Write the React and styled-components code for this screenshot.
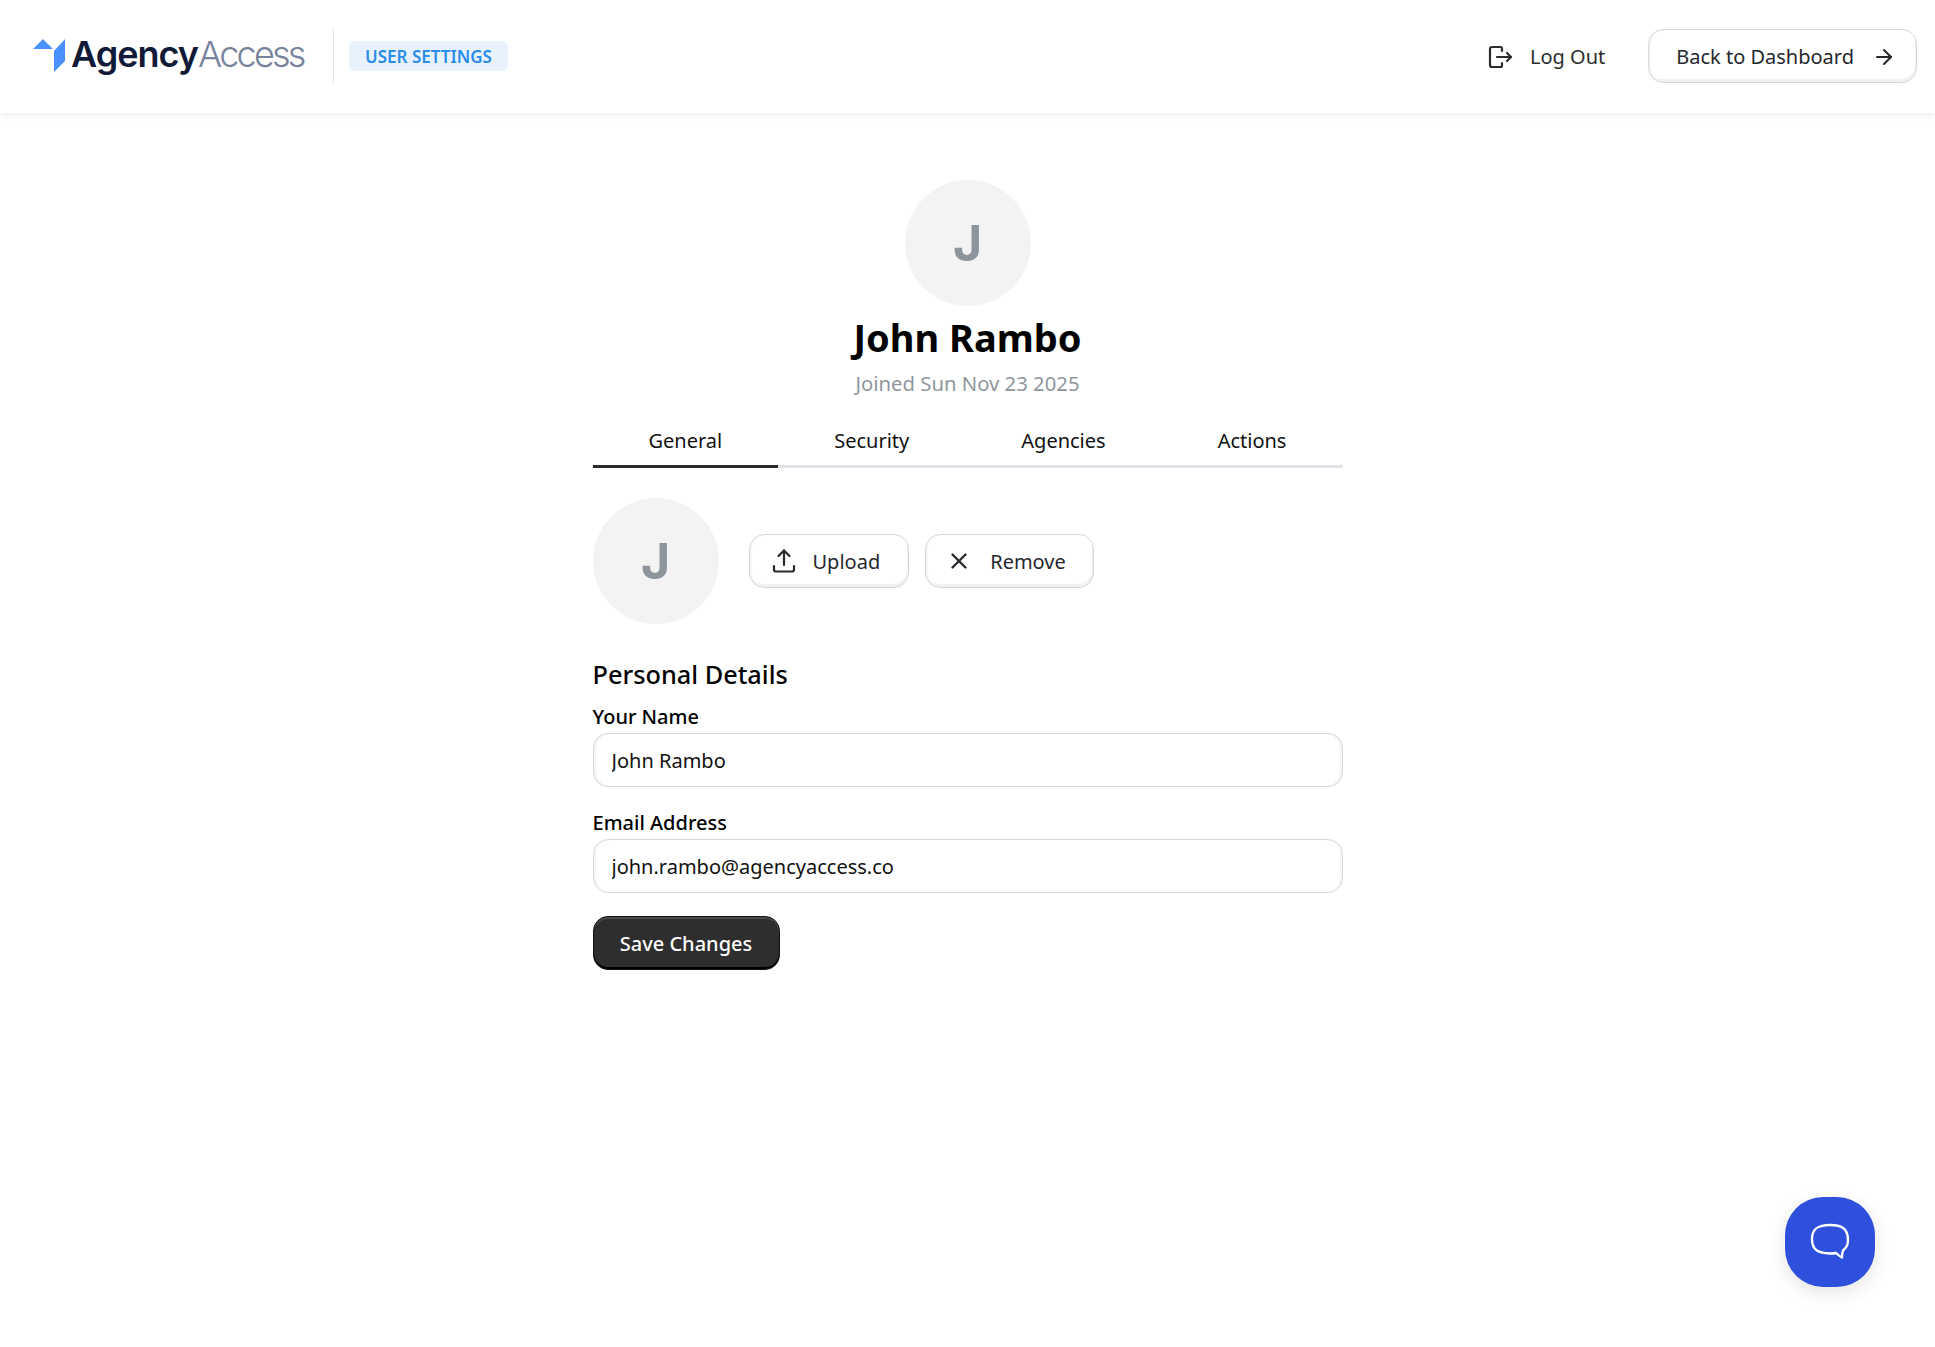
import React from 'react';
import styled, { createGlobalStyle } from 'styled-components';
import { ArrowRight, X } from 'lucide-react';

const GlobalStyle = createGlobalStyle`
  html, body {
    margin: 0;
    background: #fff;
    color: #000;
    font-family: 'Noto Sans', 'Open Sans', sans-serif;
  }
  * { box-sizing: border-box; }
`;

const Page = styled.div`
  min-height: 1347px;
`;

const Header = styled.header`
  height: 113px;
  padding: 0 18px 2px 33px;
  display: flex;
  align-items: center;
  justify-content: space-between;
  box-shadow: 0 2px 8px rgba(0, 0, 0, 0.07);
`;

const HeaderGroup = styled.div`
  display: flex;
  align-items: center;
`;

const Logo = styled.div`
  display: flex;
  align-items: center;
  width: 283px;
  font-family: Inter, sans-serif;
  font-size: 36px;
  line-height: 1;
`;

const LogoMark = styled.svg`
  width: 33px;
  height: 34px;
  margin-right: 5px;
  flex: none;
`;

const LogoText = styled.div`
  position: relative;
  top: -2px;
`;

const LogoStrong = styled.span`
  font-weight: 600;
  letter-spacing: -1px;
  color: #111a38;
`;

const LogoLight = styled.span`
  font-weight: 300;
  letter-spacing: -2.8px;
  color: #78839b;
`;

const Divider = styled.div`
  width: 1px;
  height: 54px;
  margin: 0 15px 0 17px;
  background: #e2e4e8;
`;

const Badge = styled.div`
  height: 30px;
  padding: 1px 16px 0;
  display: flex;
  align-items: center;
  border-radius: 6px;
  background: #e8f2fd;
  color: #2a8ceb;
  font-size: 17px;
  font-weight: 600;
`;

const LogOut = styled.div`
  display: flex;
  align-items: center;
  gap: 17px;
  margin-right: 43px;
  padding-top: 2px;
  font-size: 20px;
  color: #2d2d2d;
  svg { width: 26px; height: 26px; }
`;

const OutlineButton = styled.button`
  height: 54px;
  padding: ${(p) => p.$top || 0}px ${(p) => p.$right}px 0 ${(p) => p.$left}px;
  display: flex;
  align-items: center;
  gap: ${(p) => p.$gap}px;
  border: 1.5px solid #d5d8dd;
  border-radius: 15px;
  background: #fff;
  box-shadow: inset -1px -3px 0 #f0f1f3, inset 2px 0 0 #f4f5f6;
  color: #25282d;
  font-family: inherit;
  font-size: 20px;
  svg { flex: none; }
`;

const Main = styled.main`
  width: 750px;
  margin: 0 auto;
  padding-top: 67px;
`;

const Profile = styled.section`
  display: flex;
  flex-direction: column;
  align-items: center;
`;

const Avatar = styled.div`
  width: 126px;
  height: 126px;
  flex: none;
  display: flex;
  align-items: center;
  justify-content: center;
  border-radius: 50%;
  background: #f3f3f3;
  color: #8d949c;
  font-family: Inter, sans-serif;
  font-size: 50px;
  font-weight: 700;
`;

const Name = styled.h1`
  margin: 5px 0 0;
  font-size: 38px;
  line-height: 52px;
  font-weight: 700;
`;

const Joined = styled.div`
  margin-top: 5px;
  font-size: 20.3px;
  line-height: 30px;
  color: #8f969d;
`;

const Tabs = styled.nav`
  align-self: stretch;
  display: flex;
  margin-top: 20px;
  border-bottom: 3px solid #dfe2e6;
`;

const Tab = styled.div`
  padding: 0 56px 3px;
  height: 50px;
  margin-bottom: -3px;
  display: flex;
  align-items: center;
  font-size: 20px;
  color: #111;
  border-bottom: 3px solid ${(p) => (p.$active ? '#2b2b2b' : 'transparent')};
`;

const AvatarRow = styled.div`
  display: flex;
  align-items: center;
  gap: 30px;
  margin-top: 30px;
`;

const ButtonGroup = styled.div`
  display: flex;
  gap: 16px;
`;

const SectionTitle = styled.h2`
  margin: 30px 0 0;
  font-size: 25.3px;
  line-height: 40px;
  font-weight: 500;
`;

const Field = styled.div`
  margin-top: ${(p) => p.$top}px;
`;

const Label = styled.label`
  display: block;
  height: 29px;
  font-size: 20px;
  line-height: 26px;
  font-weight: 500;
`;

const Input = styled.input`
  display: block;
  width: 100%;
  height: 54px;
  padding: 0 18px;
  border: 1.5px solid #d5d8dd;
  border-radius: 15px;
  background: #fff;
  box-shadow: inset 2px 0 0 #f2f3f4, inset -2px 0 0 #f2f3f4;
  font-family: inherit;
  font-size: 20px;
  color: #111;
  outline: none;
`;

const SaveButton = styled.button`
  display: block;
  width: 187px;
  height: 54px;
  margin-top: 23px;
  border: 1.5px solid #111;
  border-radius: 15px;
  background: #2e2e2e;
  box-shadow: inset 0 -2px 0 #000, inset 0 2px 0 #4a4a4a;
  color: #fff;
  font-family: inherit;
  font-size: 20px;
  font-weight: 500;
`;

const ChatButton = styled.button`
  position: fixed;
  left: 1785px;
  top: 1197px;
  width: 90px;
  height: 90px;
  display: flex;
  align-items: center;
  justify-content: center;
  padding: 0;
  border: 0;
  border-radius: 38px;
  background: #2f50dc;
  box-shadow: 0 6px 18px rgba(0, 0, 0, 0.1);
`;

function UploadIcon() {
  return (
    <svg width="26" height="26" viewBox="0 0 26 26" fill="none" stroke="#25282d" strokeWidth="2.2" strokeLinecap="round" strokeLinejoin="round">
      <path d="M3 18v3.5a2 2 0 0 0 2 2h16a2 2 0 0 0 2-2V18" />
      <path d="M13 17V2.5" />
      <path d="M7.5 8 13 2.5 18.5 8" />
    </svg>
  );
}

function LogOutIcon() {
  return (
    <svg viewBox="0 0 26 26" fill="none" stroke="#2d2d2d" strokeWidth="2.2" strokeLinecap="round" strokeLinejoin="round">
      <path d="M15 7V4.5A1.5 1.5 0 0 0 13.5 3H5a2 2 0 0 0-2 2v16a2 2 0 0 0 2 2h8.500a1.500 1.500 0 0 0 1.500-1.500V19" />
      <path d="M10 13h14" />
      <path d="M20 9l4 4-4 4" />
    </svg>
  );
}

function ChatIcon() {
  return (
    <svg width="40" height="38" viewBox="0 0 40 38" fill="none" stroke="#fff" strokeWidth="2.400" strokeLinejoin="round">
      <path d="M20 2c11 0 18 3 18 15 0 4-1 7-4 9.500-1.500 1.300-2 3-2 8-2-1-4-2.500-6-4.500-2 .5-4 .5-6 .5C9 30 2 28 2 16 2 5 9 2 20 2z" />
    </svg>
  );
}

export default function App() {
  return (
    <Page>
      <GlobalStyle />
      <Header>
        <HeaderGroup>
          <Logo>
            <LogoMark viewBox="0 0 33 34">
              <path fill="#4a90ff" d="M0 10 10 0l10 10zM21 12 32 0v22L21 33z" />
            </LogoMark>
            <LogoText>
              <LogoStrong>Agency</LogoStrong>
              <LogoLight>Access</LogoLight>
            </LogoText>
          </Logo>
          <Divider />
          <Badge>USER SETTINGS</Badge>
        </HeaderGroup>
        <HeaderGroup>
          <LogOut>
            <LogOutIcon />
            Log Out
          </LogOut>
          <OutlineButton $top={2} $left={27} $right={20} $gap={18}>
            Back to Dashboard
            <ArrowRight size={24} strokeWidth={2} />
          </OutlineButton>
        </HeaderGroup>
      </Header>
      <Main>
        <Profile>
          <Avatar>J</Avatar>
          <Name>John Rambo</Name>
          <Joined>Joined Sun Nov 23 2025</Joined>
          <Tabs>
            <Tab $active>General</Tab>
            <Tab>Security</Tab>
            <Tab>Agencies</Tab>
            <Tab>Actions</Tab>
          </Tabs>
        </Profile>
        <AvatarRow>
          <Avatar>J</Avatar>
          <ButtonGroup>
            <OutlineButton $left={21} $right={28} $gap={16}>
              <UploadIcon />
              Upload
            </OutlineButton>
            <OutlineButton $left={20} $right={27} $gap={18}>
              <X size={26} strokeWidth={2.2} />
              Remove
            </OutlineButton>
          </ButtonGroup>
        </AvatarRow>
        <SectionTitle>Personal Details</SectionTitle>
        <Field $top={10}>
          <Label>Your Name</Label>
          <Input defaultValue="John Rambo" />
        </Field>
        <Field $top={23}>
          <Label>Email Address</Label>
          <Input defaultValue="john.rambo@agencyaccess.co" />
        </Field>
        <SaveButton>Save Changes</SaveButton>
      </Main>
      <ChatButton aria-label="Open chat">
        <ChatIcon />
      </ChatButton>
    </Page>
  );
}
